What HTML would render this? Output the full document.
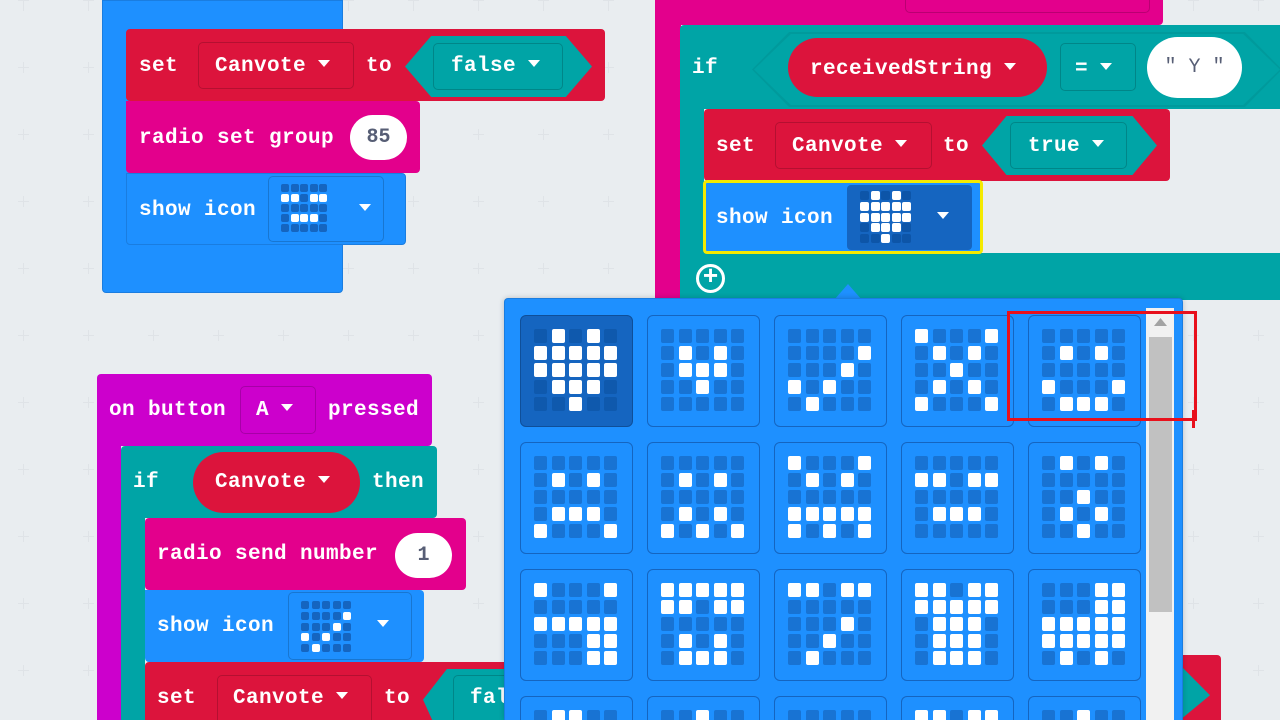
<!DOCTYPE html>
<html><head><meta charset="utf-8">
<style>
*{margin:0;padding:0;box-sizing:border-box}
html,body{width:1280px;height:720px;overflow:hidden}
body{position:relative;background:#e9edf0;font-family:"Liberation Mono",monospace;font-weight:bold;}
#clip{position:absolute;left:0;top:0;width:1280px;height:720px;overflow:hidden}
.b{position:absolute}
.t{position:absolute;color:#fff;font-size:21px;height:26px;line-height:26px;white-space:nowrap;letter-spacing:0.4px}
.dd{display:inline-block;width:0;height:0;border-left:6px solid transparent;border-right:6px solid transparent;border-top:7px solid #fff;vertical-align:middle;margin-left:12px;margin-top:-3px}
.f{position:absolute;border:1px solid rgba(0,0,0,0.18);border-radius:5px}
.ov{position:absolute;background:#fff;border-radius:24px;color:#575e75;font-size:20px;text-align:center}
.hex{position:absolute}
.cell{position:absolute;width:113px;height:112px;border:1px solid #1565c0;border-radius:6px;background:#1e90ff}
.led{position:absolute;width:13px;height:14px;border-radius:2px}
.grid{position:absolute}
</style></head><body><div id="clip">
<div id="plus" class="b" style="left:0;top:0;width:1280px;height:720px"></div>

<div class="b" style="left:102px;top:0;width:241px;height:293px;background:#1e90ff;border-radius:0 0 4px 4px;border:1px solid #1a7de0"></div>
<div class="b" style="left:126px;top:29px;width:479px;height:72px;background:#dc143c;border-radius:4px"></div>
<div class="t" style="left:139px;top:54px">set</div>
<div class="f" style="left:198px;top:42px;width:156px;height:47px"></div>
<div class="t" style="left:215px;top:54px">Canvote<span class="dd"></span></div>
<div class="t" style="left:366px;top:54px">to</div>
<div class="hex" style="left:405px;top:36px;width:187px;height:61px;background:#00a4a6;clip-path:polygon(0 50%,14% 0,86% 0,100% 50%,86% 100%,14% 100%)"></div>
<div class="f" style="left:433px;top:43px;width:130px;height:47px"></div>
<div class="t" style="left:451px;top:54px">false<span class="dd"></span></div>
<div class="b" style="left:126px;top:101px;width:294px;height:72px;background:#e3008c;border-radius:0 4px 4px 4px"></div>
<div class="t" style="left:139px;top:126px">radio set group</div>
<div class="ov" style="left:350px;top:115px;width:57px;height:45px;line-height:45px">85</div>
<div class="b" style="left:126px;top:173px;width:280px;height:72px;background:#1e90ff;border-radius:0 4px 4px 4px;border:1px solid #1a7de0"></div>
<div class="t" style="left:139px;top:198px">show icon</div>
<div class="f" style="left:268px;top:176px;width:116px;height:66px"></div>
<div class="grid" data-p="00000,11011,00000,01110,00000" data-s="281,184,9.5,10,8,8,#1565c0"></div>
<div class="t" style="left:347px;top:198px"><span class="dd"></span></div>

<div class="b" style="left:655px;top:0;width:508px;height:25px;background:#e3008c;border-radius:0 0 4px 0"></div>
<div class="f" style="left:905px;top:-5px;width:245px;height:18px"></div>
<div class="b" style="left:655px;top:0;width:26px;height:300px;background:#e3008c"></div>
<div class="b" style="left:680px;top:25px;width:610px;height:275px;background:#00a4a6;border-radius:4px 0 0 0"></div>
<div class="b" style="left:704px;top:109px;width:576px;height:144px;background:#e9edf0"></div>
<div class="t" style="left:692px;top:56px">if</div>
<div class="hex" style="left:752px;top:32px;width:530px;height:75px;background:#009a9c;clip-path:polygon(0 50%,7% 0,93% 0,100% 50%,93% 100%,7% 100%)"></div>
<div class="hex" style="left:754px;top:34px;width:526px;height:71px;background:#00a4a6;clip-path:polygon(0 50%,7% 0,93% 0,100% 50%,93% 100%,7% 100%)"></div>
<div class="b" style="left:788px;top:38px;width:259px;height:59px;background:#dc143c;border-radius:30px"></div>
<div class="t" style="left:810px;top:57px">receivedString<span class="dd"></span></div>
<div class="f" style="left:1060px;top:43px;width:76px;height:48px"></div>
<div class="t" style="left:1075px;top:57px">=<span class="dd"></span></div>
<div class="ov" style="left:1147px;top:37px;width:95px;height:61px;line-height:61px;border-radius:31px;font-weight:normal">" Y "</div>
<div class="b" style="left:704px;top:109px;width:466px;height:72px;background:#dc143c;border-radius:4px"></div>
<div class="t" style="left:716px;top:134px">set</div>
<div class="f" style="left:775px;top:122px;width:157px;height:47px"></div>
<div class="t" style="left:792px;top:134px">Canvote<span class="dd"></span></div>
<div class="t" style="left:943px;top:134px">to</div>
<div class="hex" style="left:982px;top:116px;width:175px;height:59px;background:#00a4a6;clip-path:polygon(0 50%,14% 0,86% 0,100% 50%,86% 100%,14% 100%)"></div>
<div class="f" style="left:1010px;top:122px;width:117px;height:47px"></div>
<div class="t" style="left:1028px;top:134px">true<span class="dd"></span></div>
<div class="b" style="left:703px;top:180px;width:280px;height:74px;background:#1e90ff;border:3px solid #f4ea00;border-radius:4px"></div>
<div class="t" style="left:716px;top:206px">show icon</div>
<div class="b" style="left:847px;top:185px;width:125px;height:65px;background:#1565c0;border-radius:4px"></div>
<div class="grid" data-p="01010,11111,11111,01110,00100" data-s="860,191,10.5,10.8,9,9,#0d55a8"></div>
<div class="t" style="left:925px;top:206px"><span class="dd"></span></div>
<div class="b" style="left:696px;top:264px;width:29px;height:29px;border:3px solid #fff;border-radius:50%;color:#fff;font-size:26px;line-height:21px;text-align:center">+</div>

<div class="b" style="left:97px;top:374px;width:335px;height:72px;background:#cc00cc;border-radius:4px 4px 4px 0"></div>
<div class="b" style="left:97px;top:440px;width:24px;height:280px;background:#cc00cc"></div>
<div class="t" style="left:109px;top:398px">on button</div>
<div class="f" style="left:240px;top:386px;width:76px;height:48px"></div>
<div class="t" style="left:256px;top:398px">A<span class="dd"></span></div>
<div class="t" style="left:328px;top:398px">pressed</div>
<div class="b" style="left:121px;top:446px;width:316px;height:72px;background:#00a4a6;border-radius:4px"></div>
<div class="b" style="left:121px;top:510px;width:24px;height:210px;background:#00a4a6"></div>
<div class="t" style="left:133px;top:470px">if</div>
<div class="b" style="left:193px;top:452px;width:167px;height:61px;background:#dc143c;border-radius:31px"></div>
<div class="t" style="left:215px;top:470px">Canvote<span class="dd"></span></div>
<div class="t" style="left:372px;top:470px">then</div>
<div class="b" style="left:145px;top:518px;width:321px;height:72px;background:#e3008c;border-radius:4px"></div>
<div class="t" style="left:157px;top:542px">radio send number</div>
<div class="ov" style="left:395px;top:533px;width:57px;height:45px;line-height:45px">1</div>
<div class="b" style="left:145px;top:590px;width:279px;height:72px;background:#1e90ff;border-radius:0 4px 4px 4px"></div>
<div class="t" style="left:157px;top:614px">show icon</div>
<div class="f" style="left:288px;top:592px;width:124px;height:68px"></div>
<div class="grid" data-p="00000,00001,00010,10100,01000" data-s="301,601,10.5,10.8,8,8,#1565c0"></div>
<div class="t" style="left:365px;top:614px"><span class="dd"></span></div>
<div class="b" style="left:145px;top:662px;width:370px;height:58px;background:#dc143c;border-radius:4px 4px 0 0"></div>
<div class="t" style="left:157px;top:686px">set</div>
<div class="f" style="left:217px;top:675px;width:155px;height:50px"></div>
<div class="t" style="left:233px;top:686px">Canvote<span class="dd"></span></div>
<div class="t" style="left:384px;top:686px">to</div>
<div class="hex" style="left:423px;top:669px;width:92px;height:51px;background:#00a4a6;clip-path:polygon(0 60%,26% 0,100% 0,100% 100%,10% 100%)"></div>
<div class="f" style="left:453px;top:675px;width:62px;height:50px"></div>
<div class="t" style="left:470px;top:686px">fal</div>

<div class="b" style="left:1175px;top:655px;width:46px;height:65px;background:#dc143c;border-radius:4px 4px 0 0"></div>
<div class="hex" style="left:1180px;top:665px;width:30px;height:55px;background:#00a4a6;clip-path:polygon(0 0,100% 55%,0 100%)"></div>

<div class="hex" style="left:834px;top:284px;width:28px;height:16px;background:#1e90ff;clip-path:polygon(50% 0,100% 100%,0 100%)"></div>
<div class="b" style="left:504px;top:298px;width:679px;height:422px;background:#1e90ff;border:1px solid #1a7de0;border-bottom:none;border-radius:4px 4px 0 0;box-shadow:0 0 6px rgba(0,0,0,0.2)"></div>
<div class="b" style="left:1146px;top:308px;width:28px;height:412px;background:#f1f1f1"></div>
<div class="b" style="left:1149px;top:337px;width:23px;height:275px;background:#c1c1c1"></div>
<div class="hex" style="left:1154px;top:318px;width:13px;height:8px;background:#a3a3a3;clip-path:polygon(50% 0,100% 100%,0 100%)"></div>
<div id="cells" class="b" style="left:0;top:0;width:1280px;height:720px;overflow:hidden"></div>
<div class="b" style="left:1007px;top:311px;width:190px;height:110px;border:3px solid #e8101c"></div>
<div class="b" style="left:1192px;top:410px;width:3px;height:18px;background:#e8101c"></div>
</div>
<script>
var pl=document.getElementById('plus'),h='';
for(var x=23;x<1280;x+=65)for(var y=0;y<720;y+=67){h+='<div class="b" style="left:'+(x-5)+'px;top:'+y+'px;width:11px;height:1px;background:#dfe3e7"></div><div class="b" style="left:'+x+'px;top:'+Math.max(0,y-5)+'px;width:1px;height:11px;background:#dfe3e7"></div>';}
pl.innerHTML=h;
function grid(el,p,x0,y0,px,py,w,hh,off){var s='';var r=p.split(',');for(var i=0;i<5;i++)for(var j=0;j<5;j++){s+='<div class="led" style="left:'+(x0+j*px)+'px;top:'+(y0+i*py)+'px;width:'+w+'px;height:'+hh+'px;background:'+(r[i][j]=='1'?'#fff':off)+'"></div>';}el.innerHTML=s;}
document.querySelectorAll('.grid').forEach(function(g){var s=g.getAttribute('data-s').split(',');g.style.left='0';g.style.top='0';grid(g,g.getAttribute('data-p'),+s[0],+s[1],+s[2],+s[3],+s[4],+s[5],s[6]);});
var P=[
["01010,11111,11111,01110,00100","00000,01010,01110,00100,00000","00000,00001,00010,10100,01000","10001,01010,00100,01010,10001","00000,01010,00000,10001,01110"],
["00000,01010,00000,01110,10001","00000,01010,00000,01010,10101","10001,01010,00000,11111,10101","00000,11011,00000,01110,00000","01010,00000,00100,01010,00100"],
["10001,00000,11111,00011,00011","11111,11011,00000,01010,01110","11011,00000,00010,00100,01000","11011,11111,01110,01110,01110","00011,00011,11111,11111,01010"],
["01100,00000,00000,00000,00000","00100,00000,00000,00000,00000","00000,00000,00000,00000,00000","11011,00000,00000,00000,00000","00100,00000,00000,00000,00000"]];
var c='',cx=[520,647,774,901,1028],cy=[315,442,569,696];
for(var r=0;r<4;r++)for(var k=0;k<5;k++){var sel=(r==0&&k==0);var off=sel?'#0f59ad':'#1873d3';
var last=(r==3);
c+='<div class="cell" style="left:'+cx[k]+'px;top:'+cy[r]+'px;'+(last?'height:24px;overflow:hidden;border-bottom:none;border-radius:6px 6px 0 0;':'')+(sel?'background:#1565c0;border-color:#0f4f99':'')+'">';
var rows=P[r][k].split(',');var nr=last?1:5;for(var i=0;i<nr;i++)for(var j=0;j<5;j++){c+='<div class="led" style="left:'+(13+j*17.5)+'px;top:'+(13+i*17)+'px;background:'+(rows[i][j]=='1'?'#fff':off)+'"></div>';}
c+='</div>';}
document.getElementById('cells').innerHTML=c;
</script>
</body></html>
